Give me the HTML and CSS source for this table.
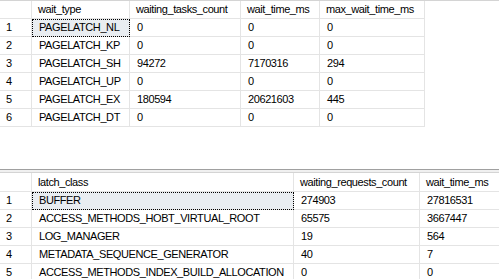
FILE: index.html
```html
<!DOCTYPE html>
<html>
<head>
<meta charset="utf-8">
<link rel="stylesheet" href="styles.css">
</head>
<body>
<div class="pane pane-top">
  <table class="grid">
    <colgroup><col class="w-num"><col class="w-a"><col class="w-b"><col class="w-c"><col class="w-d"></colgroup>
    <thead><tr><th class="num"></th><th>wait_type</th><th>waiting_tasks_count</th><th>wait_time_ms</th><th>max_wait_time_ms</th></tr></thead>
    <tbody>
      <tr><td class="num">1</td><td class="sel">PAGELATCH_NL</td><td>0</td><td>0</td><td>0</td></tr>
      <tr><td class="num">2</td><td>PAGELATCH_KP</td><td>0</td><td>0</td><td>0</td></tr>
      <tr><td class="num">3</td><td>PAGELATCH_SH</td><td>94272</td><td>7170316</td><td>294</td></tr>
      <tr><td class="num">4</td><td>PAGELATCH_UP</td><td>0</td><td>0</td><td>0</td></tr>
      <tr><td class="num">5</td><td>PAGELATCH_EX</td><td>180594</td><td>20621603</td><td>445</td></tr>
      <tr><td class="num">6</td><td>PAGELATCH_DT</td><td>0</td><td>0</td><td>0</td></tr>
    </tbody>
  </table>
</div>
<div class="splitter"></div>
<div class="pane pane-bottom">
  <table class="grid grid-wide">
    <colgroup><col class="w-num"><col class="w-e"><col class="w-f"><col class="w-g"></colgroup>
    <thead><tr><th class="num"></th><th>latch_class</th><th>waiting_requests_count</th><th>wait_time_ms</th></tr></thead>
    <tbody>
      <tr><td class="num">1</td><td class="sel">BUFFER</td><td>274903</td><td>27816531</td></tr>
      <tr><td class="num">2</td><td>ACCESS_METHODS_HOBT_VIRTUAL_ROOT</td><td>65575</td><td>3667447</td></tr>
      <tr><td class="num">3</td><td>LOG_MANAGER</td><td>19</td><td>564</td></tr>
      <tr><td class="num">4</td><td>METADATA_SEQUENCE_GENERATOR</td><td>40</td><td>7</td></tr>
      <tr><td class="num">5</td><td>ACCESS_METHODS_INDEX_BUILD_ALLOCATION</td><td>0</td><td>0</td></tr>
    </tbody>
  </table>
</div>
</body>
</html>
```
FILE: styles.css
```css
html, body {
  margin: 0;
  padding: 0;
  background: #ffffff;
  width: 499px;
  height: 279px;
  overflow: hidden;
}
body {
  font-family: "Liberation Sans", Arial, sans-serif;
  font-size: 11px;
  letter-spacing: -0.4px;
  color: #000;
}
.pane {
  overflow: hidden;
  border-top: 1px solid #d4d4d4;
}
.pane-top {
  height: 168px;
}
.splitter {
  height: 2px;
  border-top: 1px solid #a0a0a0;
  background: #f0f0f0;
}
.pane-bottom {
  height: 106px;
}
.grid {
  border-collapse: separate;
  border-spacing: 0;
  table-layout: fixed;
  width: 425px;
}
.grid-wide {
  width: 540px;
}
.w-num { width: 32px; }
.w-a { width: 98px; }
.w-b { width: 111px; }
.w-c { width: 79px; }
.w-d { width: 105px; }
.w-e { width: 262px; }
.w-f { width: 126px; }
.w-g { width: 120px; }
.grid th, .grid td {
  padding: 0 0 0 7px;
  border-right: 1px solid #e4e4e4;
  border-bottom: 1px solid #e4e4e4;
  line-height: 17px;
  height: 17px;
  white-space: nowrap;
  overflow: hidden;
  text-align: left;
  font-weight: normal;
}
.grid th {
  padding-left: 6px;
}
.pane-bottom .grid th {
  line-height: 18px;
  height: 18px;
}
.grid td.num {
  padding-left: 6px;
}
.grid td.sel {
  background: #e9edf1;
  outline: 1px dotted #000;
  outline-offset: -1px;
}
```
